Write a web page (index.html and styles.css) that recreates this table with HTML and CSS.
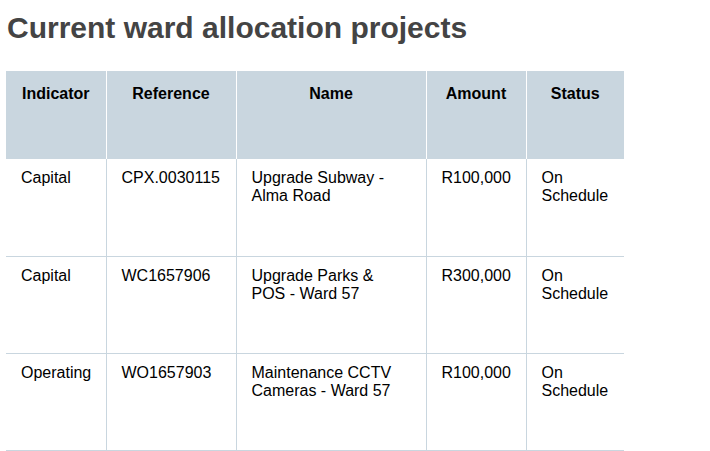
FILE: index.html
```html
<!DOCTYPE html>
<html>
<head>
<meta charset="utf-8">
<link rel="stylesheet" href="styles.css">
</head>
<body>
<h1 class="title">Current ward allocation projects</h1>
<table class="projects">
  <colgroup>
    <col class="c1"><col class="c2"><col class="c3"><col class="c4"><col class="c5">
  </colgroup>
  <thead>
    <tr>
      <th>Indicator</th>
      <th>Reference</th>
      <th>Name</th>
      <th>Amount</th>
      <th>Status</th>
    </tr>
  </thead>
  <tbody>
    <tr>
      <td>Capital</td>
      <td>CPX.0030115</td>
      <td>Upgrade Subway - Alma Road</td>
      <td>R100,000</td>
      <td>On Schedule</td>
    </tr>
    <tr>
      <td>Capital</td>
      <td>WC1657906</td>
      <td>Upgrade Parks &amp; POS - Ward 57</td>
      <td>R300,000</td>
      <td>On Schedule</td>
    </tr>
    <tr>
      <td>Operating</td>
      <td>WO1657903</td>
      <td>Maintenance CCTV Cameras - Ward 57</td>
      <td>R100,000</td>
      <td>On Schedule</td>
    </tr>
  </tbody>
</table>
</body>
</html>
```

FILE: styles.css
```css
html, body {
  margin: 0;
  padding: 0;
  background: #ffffff;
}
body {
  padding: 0 6px;
  font-family: "Liberation Sans", Arial, Helvetica, sans-serif;
  color: #000;
}
.title {
  margin: 0;
  padding: 10px 0 0 1px;
  font-size: 30px;
  line-height: 36px;
  font-weight: bold;
  color: #444444;
}
.projects {
  margin-top: 25px;
  border-collapse: collapse;
  table-layout: fixed;
  width: 618px;
  font-size: 16px;
  line-height: 18px;
}
.c1 { width: 100px; }
.c2 { width: 130px; }
.c3 { width: 190px; }
.c4 { width: 100px; }
.c5 { width: 98px; }
.projects th {
  background: #c9d6df;
  height: 88px;
  box-sizing: border-box;
  padding: 14px 10px 0;
  vertical-align: top;
  text-align: center;
  font-weight: bold;
  border-left: 1px solid #ffffff;
}
.projects th:first-child { border-left: none; }
.projects td {
  height: 97px;
  box-sizing: border-box;
  padding: 10px 15px 0;
  vertical-align: top;
  text-align: left;
  border-left: 1px solid #c9d6df;
  border-bottom: 1px solid #c9d6df;
}
.projects td:first-child { border-left: none; }
```
